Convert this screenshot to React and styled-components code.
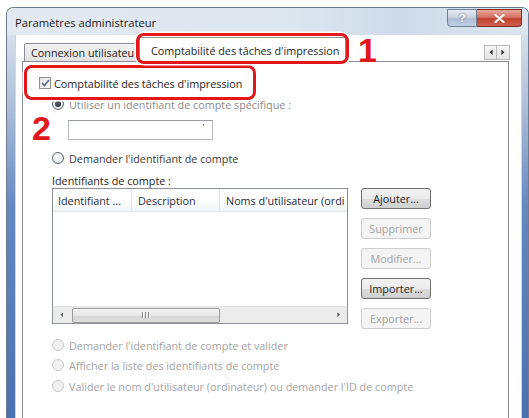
import styled, { createGlobalStyle } from 'styled-components';

const GlobalStyle = createGlobalStyle`
  html, body {
    margin: 0;
    padding: 0;
    background: #fff;
  }
  body {
    font-family: 'Open Sans', 'Noto Sans', sans-serif;
    font-size: 10.8px;
    color: #1e1e1e;
  }
  * {
    box-sizing: border-box;
  }
`;

const Page = styled.div`
  width: 529px;
  height: 418px;
  overflow: hidden;
  padding: 7px 0 0 6px;
`;

const Frame = styled.div`
  width: 523px;
  height: 411px;
  border: 1px solid #6b7c94;
  border-bottom: none;
  border-radius: 7px 7px 0 0;
  background: #dfe6ef;
  overflow: hidden;
  display: flex;
  flex-direction: column;
`;

const TitleBar = styled.div`
  flex: none;
  height: 27px;
  display: flex;
  align-items: center;
  padding: 2px 0 0 8px;
  background: linear-gradient(90deg, #e3e9f1 0%, #dde5ef 55%, #cfdbea 75%, #dde5ef 100%);
`;

const Title = styled.span`
  font-size: 11.2px;
  color: #1a1a1a;
`;

const Captions = styled.div`
  margin-left: auto;
  margin-right: 6px;
  align-self: flex-start;
  margin-top: -1px;
  display: flex;
`;

const CaptionButton = styled.div`
  width: ${({ $wide }) => ($wide ? '45px' : '30px')};
  height: 18px;
  display: flex;
  align-items: center;
  justify-content: center;
  border: 1px solid ${({ $danger }) => ($danger ? '#7d2b22' : '#6f7f96')};
  border-left: ${({ $danger }) => ($danger ? 'none' : '1px solid #6f7f96')};
  border-radius: ${({ $danger }) => ($danger ? '0 0 4px 0' : '0 0 0 4px')};
  background: ${({ $danger }) =>
    $danger
      ? 'linear-gradient(180deg, #e9a99c 0%, #d4705f 45%, #c2412f 55%, #d0614c 100%)'
      : 'linear-gradient(180deg, #e4eaf2 0%, #c6d1df 45%, #aebdd1 55%, #c0cfe2 100%)'};
  color: #fff;
  font: bold 11px 'Liberation Sans', sans-serif;
  text-shadow: 0 0 2px #5b6c84;
`;

const Body = styled.div`
  flex: 1;
  min-height: 0;
  display: flex;
`;

const SideBand = styled.div`
  flex: none;
  width: ${({ $w }) => $w}px;
  background: linear-gradient(180deg, #d6dfeb 0%, #aabcd6 20%, #6488c0 45%, #4a71b0 100%);
  box-shadow: inset ${({ $right }) => ($right ? '1px' : '-1px')} 0 0 #c6d7ee;
`;

const Client = styled.div`
  flex: 1;
  min-width: 0;
  padding: 0 12px 0 6px;
  background: #fff;
  display: flex;
  flex-direction: column;
`;

const TabStrip = styled.div`
  flex: none;
  height: 26px;
  display: flex;
  align-items: flex-end;
  padding-left: 2px;
  position: relative;
  z-index: 1;
`;

const Tab = styled.div`
  position: relative;
  flex: none;
  height: ${({ $active }) => ($active ? '25px' : '18px')};
  width: ${({ $active }) => ($active ? '207px' : '117px')};
  margin-left: ${({ $active }) => ($active ? '-2px' : '0')};
  margin-bottom: ${({ $active }) => ($active ? '-1px' : '0')};
  padding-left: ${({ $active }) => ($active ? '11px' : '6px')};
  display: flex;
  align-items: center;
  white-space: nowrap;
  overflow: ${({ $active }) => ($active ? 'visible' : 'hidden')};
  border: 1px solid #898c95;
  border-bottom: none;
  border-radius: 2px 2px 0 0;
  background: ${({ $active }) =>
    $active ? '#fff' : 'linear-gradient(180deg, #f3f3f3, #e2e2e2)'};
  color: #1e1e1e;
`;

const Highlight = styled.div`
  position: absolute;
  border: 3.5px solid #e3161b;
  border-radius: 8px;
  box-shadow: 0 0 0 1.5px #fff;
  pointer-events: none;
`;

const TabHighlight = styled(Highlight)`
  left: -4px;
  right: -4px;
  top: -5px;
  bottom: -2px;
`;

const RowHighlight = styled(Highlight)`
  left: -15px;
  top: -11px;
  width: 232px;
  height: 35px;
`;

const Marker = styled.span`
  font: bold 34px/34px 'Liberation Sans', Arial, sans-serif;
  height: 34px;
  color: #e3161b;
`;

const TabMarker = styled(Marker)`
  margin-left: 12px;
  margin-bottom: -6px;
  align-self: flex-end;
`;

const FieldMarker = styled(Marker)`
  position: absolute;
  left: -7px;
  top: -9px;
`;

const TabScroll = styled.div`
  margin-left: auto;
  margin-right: -1px;
  align-self: flex-start;
  margin-top: 10px;
  display: flex;
`;

const TinyButton = styled.div`
  width: 13px;
  height: 15px;
  border: 1px solid #b9b9b9;
  background: linear-gradient(180deg, #f6f6f6, #e4e4e4);
  display: flex;
  align-items: center;
  justify-content: center;
  & + & {
    border-left: none;
  }
`;

const Panel = styled.div`
  flex: 1;
  min-height: 0;
  position: relative;
  border: 1px solid #898c95;
  border-bottom: none;
  background: #fff;
  padding: 14px 0 0 16px;
  display: flex;
  flex-direction: column;
`;

const CheckRow = styled.div`
  flex: none;
  position: relative;
  height: 14px;
  display: flex;
  align-items: center;
  gap: 3px;
  color: #1e1e1e;
`;

const CheckBox = styled.span`
  width: 12px;
  height: 12px;
  border: 1px solid #8e8f8f;
  background: linear-gradient(135deg, #e4e4e4, #fbfbfb);
  display: flex;
  align-items: center;
  justify-content: center;
`;

const OptionRow = styled.div`
  flex: none;
  height: 14px;
  margin-top: ${({ $gap }) => $gap}px;
  padding-left: 13px;
  display: flex;
  align-items: center;
  gap: 5px;
  white-space: nowrap;
  color: ${({ $disabled, $muted }) =>
    $disabled ? '#a4a4a4' : $muted ? '#8c8c8c' : '#3a3a3a'};
`;

const Radio = styled.span`
  flex: none;
  width: 12px;
  height: 12px;
  border-radius: 50%;
  border: 1px solid ${({ $disabled }) => ($disabled ? '#cacaca' : '#5b6676')};
  background: ${({ $disabled }) =>
    $disabled
      ? '#f1f1f1'
      : 'radial-gradient(circle at 40% 35%, #ffffff, #dadada)'};
  display: flex;
  align-items: center;
  justify-content: center;
  &::after {
    content: '';
    display: ${({ $checked }) => ($checked ? 'block' : 'none')};
    width: 6px;
    height: 6px;
    border-radius: 50%;
    background: radial-gradient(circle at 40% 35%, #59636f, #141c26);
  }
`;

const InputRow = styled.div`
  flex: none;
  position: relative;
  margin-top: 9px;
  padding-left: 29px;
`;

const TextBox = styled.div`
  width: 145px;
  height: 20px;
  border: 1px solid #b5b8bf;
  border-top-color: #9a9da4;
  background: #fff;
  position: relative;
  &::after {
    content: '';
    position: absolute;
    right: 8px;
    top: 3px;
    width: 1px;
    height: 2px;
    background: #8a8a8a;
  }
`;

const GroupLabel = styled.div`
  flex: none;
  height: 14px;
  margin-top: 8px;
  padding-left: 13px;
  display: flex;
  align-items: center;
  color: #1e1e1e;
`;

const ListRow = styled.div`
  flex: none;
  margin-top: 1px;
  padding-left: 13px;
  display: flex;
  gap: 13px;
`;

const ListBox = styled.div`
  width: 296px;
  height: 136px;
  border: 1px solid #8c9099;
  background: #fff;
  overflow: hidden;
  display: flex;
  flex-direction: column;
`;

const Header = styled.div`
  height: 23px;
  display: flex;
  background: linear-gradient(180deg, #ffffff 0%, #ffffff 50%, #f3f4f6 100%);
  border-bottom: 1px solid #e6e8eb;
`;

const HeaderCell = styled.div`
  flex: ${({ $w }) => ($w ? 'none' : '1')};
  width: ${({ $w }) => ($w ? `${$w}px` : 'auto')};
  min-width: 0;
  padding-left: ${({ $pad }) => $pad}px;
  display: flex;
  align-items: center;
  white-space: nowrap;
  overflow: hidden;
  border-right: ${({ $w }) => ($w ? '1px solid #e3e5e8' : 'none')};
  color: #1f2a3a;
`;

const ListBody = styled.div`
  flex: 1;
`;

const HScroll = styled.div`
  height: 17px;
  display: flex;
  align-items: center;
  background: #ececec;
  border-top: 1px solid #e4e4e4;
`;

const ScrollArrow = styled.div`
  width: 17px;
  height: 16px;
  display: flex;
  align-items: center;
  justify-content: center;
  margin-left: ${({ $right }) => ($right ? 'auto' : '0')};
`;

const Thumb = styled.div`
  width: 148px;
  height: 15px;
  margin-left: 2px;
  border: 1px solid #9c9c9c;
  border-radius: 2px;
  background: linear-gradient(180deg, #f4f4f4 0%, #e6e6e6 50%, #d5d5d5 51%, #dedede 100%);
  display: flex;
  align-items: center;
  justify-content: center;
  gap: 1px;
`;

const Grip = styled.span`
  width: 2px;
  height: 6px;
  background: #8a8a8a;
  border-right: 1px solid #fff;
`;

const ButtonColumn = styled.div`
  display: flex;
  flex-direction: column;
  gap: 9px;
`;

const Button = styled.div`
  width: 70px;
  height: 21px;
  display: flex;
  align-items: center;
  justify-content: center;
  border-radius: 3px;
  border: 1px solid ${({ $disabled }) => ($disabled ? '#cdcdcd' : '#707070')};
  background: ${({ $disabled }) =>
    $disabled
      ? '#f4f4f4'
      : 'linear-gradient(180deg, #f2f2f2 0%, #ebebeb 50%, #dddddd 51%, #cfcfcf 100%)'};
  color: ${({ $disabled }) => ($disabled ? '#a2a2a2' : '#1e1e1e')};
`;

const Triangle = ({ dir = 'left', color = '#333', size = 5 }) => (
  <svg width={size} height={size * 1.6} viewBox="0 0 5 8">
    {dir === 'left' ? (
      <path d="M4.5 0.5 L0.8 4 L4.5 7.5 Z" fill={color} />
    ) : (
      <path d="M0.5 0.5 L4.2 4 L0.5 7.5 Z" fill={color} />
    )}
  </svg>
);

const bottomOptions = [
  { label: "Demander l'identifiant de compte et valider", gap: 9 },
  { label: 'Afficher la liste des identifiants de compte', gap: 6 },
  {
    label: "Valider le nom d'utilisateur (ordinateur) ou demander l'ID de compte",
    gap: 7,
  },
];

const buttons = [
  { label: 'Ajouter...' },
  { label: 'Supprimer', disabled: true },
  { label: 'Modifier...', disabled: true },
  { label: 'Importer...' },
  { label: 'Exporter...', disabled: true },
];

export default function App() {
  return (
    <>
      <GlobalStyle />
      <Page>
        <Frame>
          <TitleBar>
            <Title>Paramètres administrateur</Title>
            <Captions>
              <CaptionButton>?</CaptionButton>
              <CaptionButton $wide $danger>
                <svg width="11" height="9" viewBox="0 0 11 9">
                  <path
                    d="M1.5 1 L9.5 8 M9.5 1 L1.5 8"
                    stroke="#fff"
                    strokeWidth="2.2"
                    strokeLinecap="round"
                  />
                </svg>
              </CaptionButton>
            </Captions>
          </TitleBar>
          <Body>
            <SideBand $w={9} />
            <Client>
              <TabStrip>
                <Tab>Connexion utilisateur</Tab>
                <Tab $active>
                  Comptabilité des tâches d'impression
                  <TabHighlight />
                </Tab>
                <TabMarker>1</TabMarker>
                <TabScroll>
                  <TinyButton>
                    <Triangle dir="left" size={4} />
                  </TinyButton>
                  <TinyButton>
                    <Triangle dir="right" size={4} />
                  </TinyButton>
                </TabScroll>
              </TabStrip>
              <Panel>
                <CheckRow>
                  <CheckBox>
                    <svg width="9" height="8" viewBox="0 0 9 8">
                      <path
                        d="M1 4 L3.5 6.5 L8 1"
                        fill="none"
                        stroke="#5a6a95"
                        strokeWidth="1.6"
                      />
                    </svg>
                  </CheckBox>
                  Comptabilité des tâches d'impression
                  <RowHighlight />
                </CheckRow>
                <OptionRow $gap={7} $muted>
                  <Radio $checked />
                  Utiliser un identifiant de compte spécifique :
                </OptionRow>
                <InputRow>
                  <FieldMarker>2</FieldMarker>
                  <TextBox />
                </InputRow>
                <OptionRow $gap={11}>
                  <Radio />
                  Demander l'identifiant de compte
                </OptionRow>
                <GroupLabel>Identifiants de compte :</GroupLabel>
                <ListRow>
                  <ListBox>
                    <Header>
                      <HeaderCell $w={79} $pad={5}>
                        Identifiant ...
                      </HeaderCell>
                      <HeaderCell $w={88} $pad={6}>
                        Description
                      </HeaderCell>
                      <HeaderCell $pad={6}>Noms d'utilisateur (ordi</HeaderCell>
                    </Header>
                    <ListBody />
                    <HScroll>
                      <ScrollArrow>
                        <Triangle dir="left" color="#5a5a5a" size={3.5} />
                      </ScrollArrow>
                      <Thumb>
                        <Grip />
                        <Grip />
                        <Grip />
                      </Thumb>
                      <ScrollArrow $right>
                        <Triangle dir="right" color="#5a5a5a" size={3.5} />
                      </ScrollArrow>
                    </HScroll>
                  </ListBox>
                  <ButtonColumn>
                    {buttons.map((b) => (
                      <Button key={b.label} $disabled={b.disabled}>
                        {b.label}
                      </Button>
                    ))}
                  </ButtonColumn>
                </ListRow>
                {bottomOptions.map((o) => (
                  <OptionRow key={o.label} $gap={o.gap} $disabled>
                    <Radio $disabled />
                    {o.label}
                  </OptionRow>
                ))}
              </Panel>
            </Client>
            <SideBand $w={7} $right />
          </Body>
        </Frame>
      </Page>
    </>
  );
}
